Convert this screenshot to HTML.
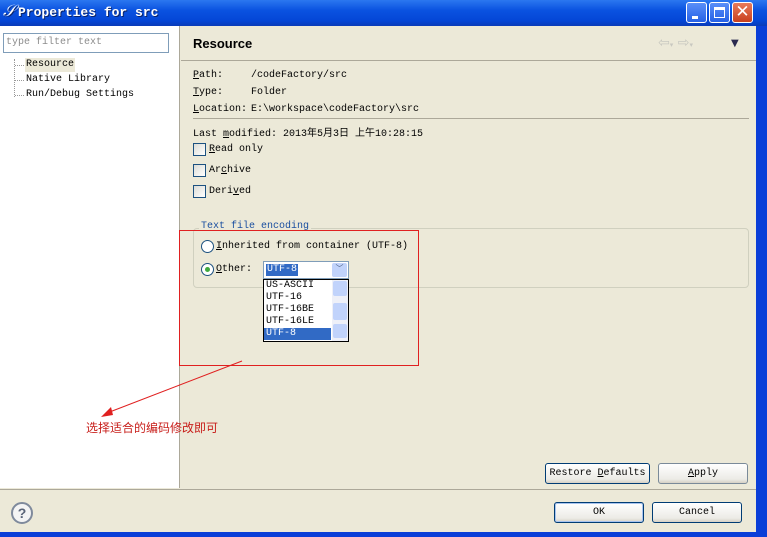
<!DOCTYPE html>
<html><head><meta charset="utf-8"><style>
*{margin:0;padding:0;box-sizing:border-box}
body{width:767px;height:537px;overflow:hidden;background:#0a3ed8;font-family:"Liberation Mono","Noto Sans CJK SC",monospace;font-size:10px;color:#000;position:relative}
.abs{position:absolute;white-space:nowrap}
#title{left:0;top:0;width:767px;height:26px;background:linear-gradient(#2b77f0,#0a52e0 40%,#0446d6 80%,#0a3bb8)}
#title span{position:absolute;left:18px;top:5px;color:#fff;font-weight:bold;font-size:13px;font-family:"Liberation Mono",monospace;text-shadow:1px 1px #0a246a}
.tb{position:absolute;top:2px;width:21px;height:21px;border:1px solid #fff;border-radius:3px;background:linear-gradient(#5a8ff8,#2661e6)}
#client{left:0;top:26px;width:756px;height:506px;background:#ece9d8}
#left{left:0;top:26px;width:180px;height:462px;background:#fff;border-right:1px solid #aca899}
u{text-decoration:underline}
.cb{position:absolute;width:13px;height:13px;border:1px solid #1c5180;background:linear-gradient(135deg,#dcdcd6,#fff)}
.btn{position:absolute;white-space:nowrap;height:21px;border:1px solid #003c74;border-radius:3px;background:linear-gradient(#fff,#ecebe6 80%,#d6d0c5);text-align:center;line-height:19px;font-size:10px}
</style></head><body>
<div id="title" class="abs"><span style="left:3px;top:3px;font-style:italic;font-family:'Liberation Serif',serif;font-size:16px;font-weight:normal">𝒮</span><span>Properties for src</span>
<div class="tb" style="left:686px"><div style="position:absolute;left:5px;top:13px;width:6px;height:3px;background:#fff"></div></div>
<div class="tb" style="left:709px"><div style="position:absolute;left:4px;top:4px;width:11px;height:11px;border:1px solid #fff;border-top-width:3px"></div></div>
<div class="tb" style="left:732px;background:linear-gradient(#e87b5a,#c8401f);color:#fff;font-size:17px;line-height:18px;text-align:center;font-family:'Liberation Sans',sans-serif">✕</div>
</div>
<div id="client" class="abs"></div>
<div id="left" class="abs"></div>
<div class="abs" style="left:3px;top:33px;width:166px;height:20px;border:1px solid #7f9db9;background:#fff;color:#8c8c8c;padding:3px 2px">type filter text</div>
<div class="abs" style="left:14px;top:59px;width:1px;height:38px;border-left:1px dotted #999"></div>
<div class="abs" style="left:15px;top:65px;width:9px;border-top:1px dotted #999"></div>
<div class="abs" style="left:15px;top:80px;width:9px;border-top:1px dotted #999"></div>
<div class="abs" style="left:15px;top:95px;width:9px;border-top:1px dotted #999"></div>
<div class="abs" style="left:25px;top:58px;background:#ece9d8;padding:0 1px;line-height:14px">Resource</div>
<div class="abs" style="left:26px;top:73px;line-height:14px">Native Library</div>
<div class="abs" style="left:26px;top:88px;line-height:14px">Run/Debug Settings</div>

<div class="abs" style="left:193px;top:36px;font-family:'Liberation Sans',sans-serif;font-weight:bold;font-size:13px">Resource</div>
<div class="abs" style="left:658px;top:35px;color:#c8c8c0;font-size:14px;font-family:'DejaVu Sans',sans-serif">⇦<span style="font-size:7px">▾</span> ⇨<span style="font-size:7px">▾</span></div>
<div class="abs" style="left:731px;top:38px;color:#2a2a50;font-size:10px;font-family:'DejaVu Sans',sans-serif">▼</div>
<div class="abs" style="left:181px;top:60px;width:575px;border-top:1px solid #aca899"></div>
<div class="abs" style="left:193px;top:67px;line-height:17px"><u>P</u>ath:<br><u>T</u>ype:<br><u>L</u>ocation:</div>
<div class="abs" style="left:251px;top:67px;line-height:17px">/codeFactory/src<br>Folder</div>
<div class="abs" style="left:251px;top:101px;line-height:17px">E:\workspace\codeFactory\src</div>
<div class="abs" style="left:193px;top:118px;width:556px;border-top:1px solid #aca899"></div>
<div class="abs" style="left:193px;top:124px">Last <u>m</u>odified: 2013年5月3日 上午10:28:15</div>
<div class="cb" style="left:193px;top:143px"></div><div class="abs" style="left:209px;top:144px"><u>R</u>ead only</div>
<div class="cb" style="left:193px;top:164px"></div><div class="abs" style="left:209px;top:165px">Ar<u>c</u>hive</div>
<div class="cb" style="left:193px;top:185px"></div><div class="abs" style="left:209px;top:186px">Deri<u>v</u>ed</div>
<div class="abs" style="left:193px;top:228px;width:556px;height:60px;border:1px solid #d0d0bf;border-radius:4px"></div>
<div class="abs" style="left:199px;top:221px;background:#ece9d8;color:#1a4fa0;padding:0 2px">Text file encoding</div>
<div class="abs" style="left:201px;top:240px;width:13px;height:13px;border:1px solid #1c5180;border-radius:50%;background:#fff"></div>
<div class="abs" style="left:216px;top:241px"><u>I</u>nherited from container (UTF-8)</div>
<div class="abs" style="left:201px;top:263px;width:13px;height:13px;border:1px solid #1c5180;border-radius:50%;background:#fff"><div style="position:absolute;left:3px;top:3px;width:5px;height:5px;border-radius:50%;background:#3fa93f"></div></div>
<div class="abs" style="left:216px;top:264px"><u>O</u>ther:</div>
<div class="abs" style="left:263px;top:261px;width:86px;height:18px;border:1px solid #7f9db9;background:#fff"><span style="position:absolute;left:2px;top:2px;background:#316ac5;color:#fff;padding:0 1px;line-height:12px">UTF-8</span><div style="position:absolute;right:1px;top:1px;width:15px;height:14px;background:#c1d3fb;border-radius:2px;text-align:center;font-size:8px;color:#4d6185;line-height:14px">﹀</div></div>
<div class="abs" style="left:263px;top:279px;width:86px;height:63px;border:1px solid #000;background:#fff;line-height:12px">
<div style="padding-left:2px">US-ASCII<br>UTF-16<br>UTF-16BE<br>UTF-16LE</div>
<div style="background:#316ac5;color:#fff;padding-left:2px;width:67px">UTF-8</div>
<div style="position:absolute;right:0;top:0;width:16px;height:61px;background:#eef0f8"><div style="height:15px;margin:1px;background:#c1d3fb;border-radius:2px"></div><div style="height:17px;margin:7px 1px 4px;background:#c1d3fb;border-radius:2px"></div><div style="height:14px;margin:1px;background:#c1d3fb;border-radius:2px"></div></div></div>
<div class="abs" style="left:179px;top:230px;width:240px;height:136px;border:1px solid #e02020"></div>
<svg class="abs" style="left:95px;top:355px" width="160" height="70"><line x1="147" y1="6" x2="12" y2="58" stroke="#e02020" stroke-width="1"/><polygon points="6,62 16,52 18,60" fill="#e02020"/></svg>
<div class="abs" style="left:86px;top:421px;color:#c8201c;font-family:'Noto Sans CJK SC',sans-serif;font-size:12px;line-height:14px">选择适合的编码修改即可</div>
<div class="btn" style="left:545px;top:463px;width:105px">Restore <u>D</u>efaults</div>
<div class="btn" style="left:658px;top:463px;width:90px;border-color:#7a8a99"><u>A</u>pply</div>
<div class="abs" style="left:0;top:489px;width:756px;border-top:1px solid #aca899"></div>
<div class="abs" style="left:11px;top:502px;width:22px;height:22px;border:2px solid #7f8a9c;border-radius:50%;background:#f4f4f4;text-align:center;font:bold 14px/18px 'Liberation Sans',sans-serif;color:#5a6478">?</div>
<div class="btn" style="left:554px;top:502px;width:90px;border-color:#003c74;box-shadow:inset 0 0 0 1px #a8c4ef">OK</div>
<div class="btn" style="left:652px;top:502px;width:90px">Cancel</div>
</body></html>
